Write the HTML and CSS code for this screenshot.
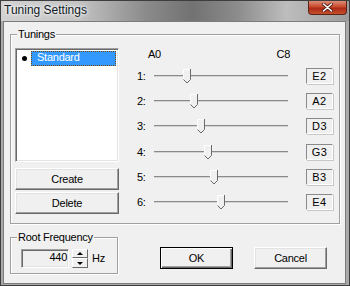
FILE: index.html
```html
<!DOCTYPE html>
<html lang="en">
<head>
    <meta charset="UTF-8">
    <title>Tuning Settings</title>
    <link rel="stylesheet" href="styles.css">
</head>
<body>
    <div class="window">
        <div class="titlebar">
            <span class="title">Tuning Settings</span>
            <div class="close-btn">
                <svg width="13" height="9" viewBox="0 0 13 9">
                    <path d="M2.5 1 L10.5 8 M10.5 1 L2.5 8" stroke="#4b1c12" stroke-width="3.2" stroke-linecap="round"/>
                    <path d="M2.5 1 L10.5 8 M10.5 1 L2.5 8" stroke="#fff" stroke-width="1.6" stroke-linecap="round"/>
                </svg>
            </div>
        </div>

        <div class="client">
            <fieldset class="group tunings">
                <legend>Tunings</legend>
                <div class="tunings-body">
                    <div class="tunings-left">
                        <div class="listbox">
                            <div class="list-item">
                                <span class="bullet-cell"><span class="bullet"></span></span>
                                <span class="item-label">Standard</span>
                            </div>
                        </div>
                        <button class="btn create">Create</button>
                        <button class="btn delete">Delete</button>
                    </div>

                    <div class="strings">
                        <div class="range-labels"><span>A0</span><span>C8</span></div>
                        <div class="string-row">
                            <span class="string-num">1:</span>
                            <div class="track"><div class="thumb" style="left: 28.6px"><svg width="8" height="15" viewBox="0 0 8 15"><polygon points="0.5,0.5 7.5,0.5 7.5,10.5 4,14 0.5,10.5" fill="#f0f0f0"/><polyline points="0.5,10.5 0.5,0.5 7,0.5" fill="none" stroke="#fff"/><polyline points="7.5,0 7.5,10.5 4,14 0.5,10.5" fill="none" stroke="#6a6a6a"/></svg></div></div>
                            <span class="note">E2</span>
                        </div>
                        <div class="string-row">
                            <span class="string-num">2:</span>
                            <div class="track"><div class="thumb" style="left: 35.6px"><svg width="8" height="15" viewBox="0 0 8 15"><polygon points="0.5,0.5 7.5,0.5 7.5,10.5 4,14 0.5,10.5" fill="#f0f0f0"/><polyline points="0.5,10.5 0.5,0.5 7,0.5" fill="none" stroke="#fff"/><polyline points="7.5,0 7.5,10.5 4,14 0.5,10.5" fill="none" stroke="#6a6a6a"/></svg></div></div>
                            <span class="note">A2</span>
                        </div>
                        <div class="string-row">
                            <span class="string-num">3:</span>
                            <div class="track"><div class="thumb" style="left: 42.6px"><svg width="8" height="15" viewBox="0 0 8 15"><polygon points="0.5,0.5 7.5,0.5 7.5,10.5 4,14 0.5,10.5" fill="#f0f0f0"/><polyline points="0.5,10.5 0.5,0.5 7,0.5" fill="none" stroke="#fff"/><polyline points="7.5,0 7.5,10.5 4,14 0.5,10.5" fill="none" stroke="#6a6a6a"/></svg></div></div>
                            <span class="note">D3</span>
                        </div>
                        <div class="string-row">
                            <span class="string-num">4:</span>
                            <div class="track"><div class="thumb" style="left: 49.6px"><svg width="8" height="15" viewBox="0 0 8 15"><polygon points="0.5,0.5 7.5,0.5 7.5,10.5 4,14 0.5,10.5" fill="#f0f0f0"/><polyline points="0.5,10.5 0.5,0.5 7,0.5" fill="none" stroke="#fff"/><polyline points="7.5,0 7.5,10.5 4,14 0.5,10.5" fill="none" stroke="#6a6a6a"/></svg></div></div>
                            <span class="note">G3</span>
                        </div>
                        <div class="string-row">
                            <span class="string-num">5:</span>
                            <div class="track"><div class="thumb" style="left: 55.6px"><svg width="8" height="15" viewBox="0 0 8 15"><polygon points="0.5,0.5 7.5,0.5 7.5,10.5 4,14 0.5,10.5" fill="#f0f0f0"/><polyline points="0.5,10.5 0.5,0.5 7,0.5" fill="none" stroke="#fff"/><polyline points="7.5,0 7.5,10.5 4,14 0.5,10.5" fill="none" stroke="#6a6a6a"/></svg></div></div>
                            <span class="note">B3</span>
                        </div>
                        <div class="string-row">
                            <span class="string-num">6:</span>
                            <div class="track"><div class="thumb" style="left: 62.6px"><svg width="8" height="15" viewBox="0 0 8 15"><polygon points="0.5,0.5 7.5,0.5 7.5,10.5 4,14 0.5,10.5" fill="#f0f0f0"/><polyline points="0.5,10.5 0.5,0.5 7,0.5" fill="none" stroke="#fff"/><polyline points="7.5,0 7.5,10.5 4,14 0.5,10.5" fill="none" stroke="#6a6a6a"/></svg></div></div>
                            <span class="note">E4</span>
                        </div>
                    </div>
                </div>
            </fieldset>

            <div class="bottom-row">
                <fieldset class="group root">
                    <legend>Root Frequency</legend>
                    <div class="freq">
                        <div class="freq-input">440</div>
                        <div class="spin">
                            <span class="spin-btn"><span class="arrow-up"></span></span>
                            <span class="spin-btn"><span class="arrow-down"></span></span>
                        </div>
                        <span class="unit">Hz</span>
                    </div>
                </fieldset>
                <button class="btn dialog-btn ok">OK</button>
                <button class="btn dialog-btn cancel">Cancel</button>
            </div>
        </div>
    </div>
</body>
</html>
```

FILE: styles.css
```css
* { box-sizing: border-box; }
body { margin: 0; background: #888; font-family: "Liberation Sans", Arial, sans-serif; font-size: 11px; letter-spacing: -0.25px; color: #000; }

.window { width: 350px; height: 286px; border: 1px solid #3e3e3e; background: #a9a9a9; display: flex; flex-direction: column; }

/* title bar */
.titlebar { height: 20px; flex-shrink: 0; display: flex; justify-content: space-between; align-items: flex-start;
    background: linear-gradient(90deg, #d2d2d2 0%, #c4c4c4 22%, #8a8a8a 42%, #727272 55%, #8c8c8c 68%, #bdbdbd 82%, #9c9c9c 100%); }
.title { padding: 2px 0 0 3px; font-size: 12px; letter-spacing: 0; color: #0f1a26; text-shadow: 0 0 3px #fff, 0 0 5px #fff; }
.close-btn { width: 39px; height: 14px; margin-right: 2px; display: flex; justify-content: center; align-items: center;
    border: 1px solid #5b2418; border-top: none; border-radius: 0 0 4px 4px;
    background: linear-gradient(#dc8c76, #c84a2e 45%, #ad2a14 55%, #c4502e); }

/* client area */
.client { flex: 1; margin: 0 3px 1px 2px; border: 1px solid #7c7c7c; background: #f0f0f0; padding: 6px 0 0 6px; }

.group { margin: 0; min-width: 0; border: 1px solid #a0a0a0; box-shadow: inset 1px 1px #fff, 1px 1px #fff; padding: 0 4px; }
.group legend { margin-left: 2px; padding: 0 1px; line-height: 13px; height: 13px; background: #f0f0f0; }

.tunings { width: 330px; }
.tunings-body { display: flex; padding: 7px 0 8px; }
.tunings-left { width: 104px; display: flex; flex-direction: column; }

.listbox { height: 114px; background: #fff; border: 1px solid; border-color: #a0a0a0 #fff #fff #a0a0a0; box-shadow: inset 1px 1px #696969, inset -1px -1px #e3e3e3; padding: 2px 2px 0 2px; }
.list-item { display: flex; height: 15px; }
.bullet-cell { width: 13px; display: flex; align-items: center; justify-content: center; }
.bullet { width: 5px; height: 5px; border-radius: 50%; background: #000; }
.item-label { flex: 1; background: #3399ff; color: #fff; padding-left: 6px; line-height: 13px; outline: 1px dotted #7a4600; outline-offset: -1px; }

.btn { font: inherit; letter-spacing: inherit; color: #000; background: #f0f0f0; padding: 0; height: 22px;
    border: 1px solid; border-color: #fff #696969 #696969 #fff; box-shadow: inset -1px -1px #a0a0a0, inset 1px 1px #e3e3e3; }
.create { margin-top: 6px; }
.delete { margin-top: 2px; }

/* string sliders */
.strings { flex: 1; padding-left: 17px; }
.range-labels { display: flex; justify-content: space-between; margin-left: 12px; width: 142px; height: 13px; line-height: 13px; margin-bottom: 2px; }
.string-row { display: flex; align-items: center; height: 25.3px; }
.string-num { width: 18px; padding-left: 1px; }
.track { position: relative; width: 134px; height: 2px; background: #8a8a8a; border-bottom: 1px solid #d4d4d4; }
.thumb { position: absolute; top: -6px; width: 8px; height: 15px; }
.thumb svg { display: block; }
.note { margin-left: 18px; width: 27px; height: 16px; line-height: 14px; text-align: center; letter-spacing: 0.5px;
    border: 1px solid; border-color: #8a8a8a #fff #fff #8a8a8a; box-shadow: 1px 1px #c8c8c8; }

/* bottom row */
.bottom-row { display: flex; align-items: flex-start; margin-top: 7px; }
.root { width: 108px; }
.freq { display: flex; align-items: center; margin: 5px 0 5px 6px; }
.freq-input { width: 48px; height: 19px; line-height: 15px; text-align: right; padding-right: 1px; background: #f0f0f0;
    border: 1px solid; border-color: #a0a0a0 #fff #fff #a0a0a0; box-shadow: inset 1px 1px #696969, inset -1px -1px #e3e3e3; }
.spin { margin-left: 3px; width: 16px; height: 19px; display: flex; flex-direction: column; }
.spin-btn { flex: 1; display: flex; align-items: center; justify-content: center; background: #f0f0f0;
    border: 1px solid; border-color: #fff #696969 #696969 #fff; }
.arrow-up { width: 0; height: 0; border-left: 3px solid transparent; border-right: 3px solid transparent; border-bottom: 3px solid #000; }
.arrow-down { width: 0; height: 0; border-left: 3px solid transparent; border-right: 3px solid transparent; border-top: 3px solid #000; }
.unit { margin-left: 4px; }

.dialog-btn { width: 73px; margin-top: 16px; }
.ok { margin-left: 42px; border: 1px solid #000; box-shadow: inset 1px 1px #fff, inset -1px -1px #696969, inset -2px -2px #a0a0a0; }
.cancel { margin-left: 21px; }
```
